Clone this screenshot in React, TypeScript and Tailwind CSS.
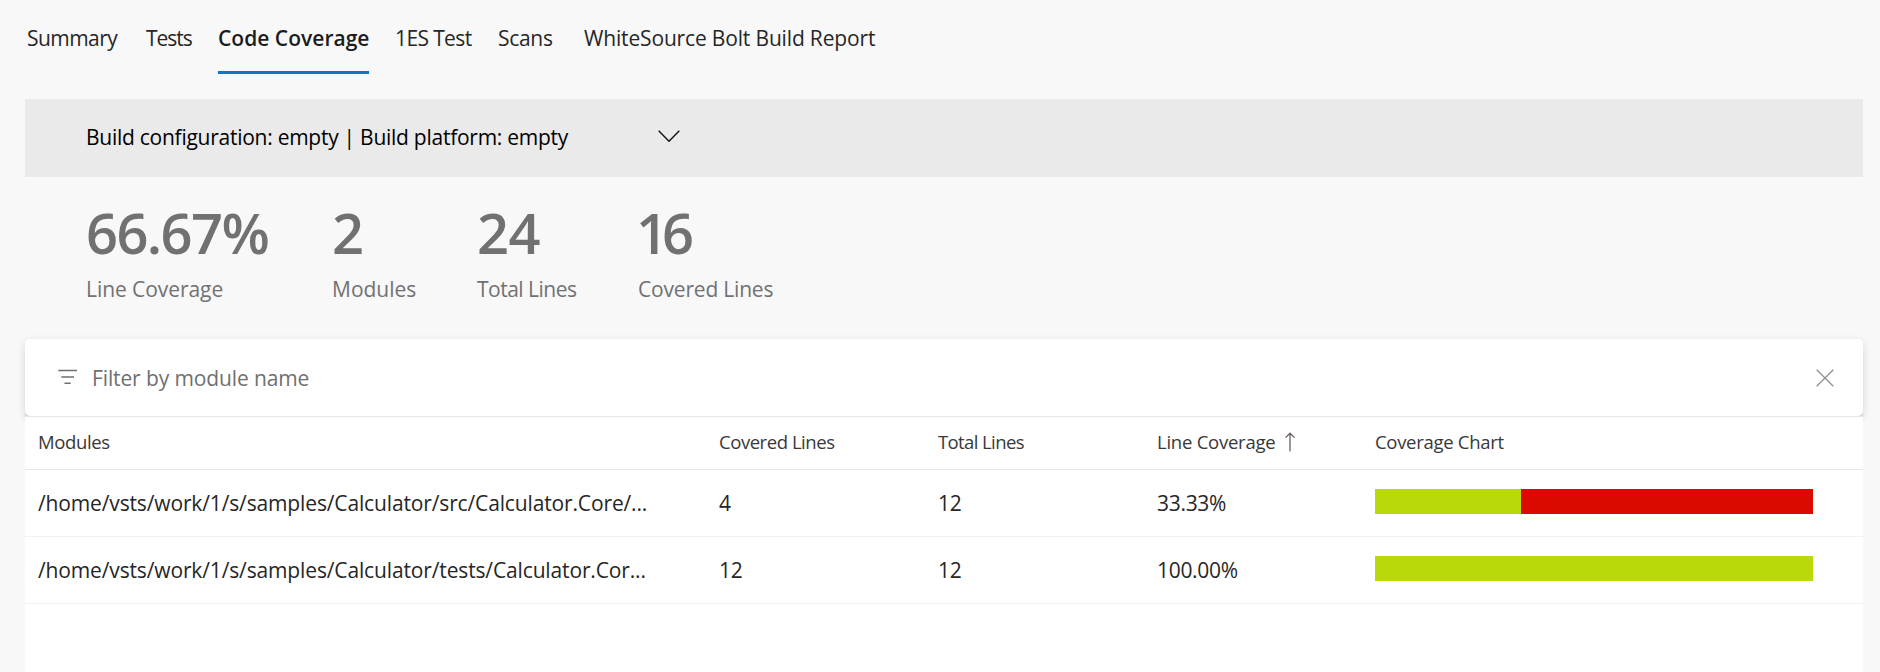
const tabs = [
  { label: 'Summary', cls: 'ml-[27px] w-[118px] tracking-[-0.55px]' },
  { label: 'Tests', cls: 'ml-[1px] w-[72px] tracking-[-1.05px]' },
  { label: 'Code Coverage', cls: 'w-[151px] font-semibold tracking-[0.02px]', active: true },
  { label: '1ES Test', cls: 'ml-[26px] w-[103px] tracking-[-0.62px]' },
  { label: 'Scans', cls: 'w-[86px] tracking-[-0.3px]' },
  { label: 'WhiteSource Bolt Build Report', cls: 'tracking-[-0.16px]' },
];

const stats = [
  { value: '66.67%', label: 'Line Coverage', col: 'w-[246px]', num: 'tracking-[-1.6px]', text: 'tracking-[-0.06px]' },
  { value: '2', label: 'Modules', col: 'w-[145px]', num: '', text: '' },
  { value: '24', label: 'Total Lines', col: 'w-[161px]', num: 'tracking-[-0.5px]', text: 'tracking-[-0.5px]' },
  { value: '16', label: 'Covered Lines', col: 'w-[180px]', num: '-ml-[2px] tracking-[-6px]', text: 'tracking-[-0.19px]' },
];

const rows = [
  {
    name: '/home/vsts/work/1/s/samples/Calculator/src/Calculator.Core/...',
    covered: 4,
    total: 12,
    percent: '33.33%',
  },
  {
    name: '/home/vsts/work/1/s/samples/Calculator/tests/Calculator.Cor...',
    covered: 12,
    total: 12,
    percent: '100.00%',
  },
];

const columns = 'grid grid-cols-[694px_219px_219px_218px_438px] items-center';

function ChevronDown() {
  return (
    <svg width="22" height="13" viewBox="0 0 22 13" fill="none" stroke="#111" strokeWidth="1.4" className="ml-[88px] -mt-[4px]">
      <path d="M0.7 0.8 11 11.2 21.3 0.8" />
    </svg>
  );
}

function FilterIcon() {
  return (
    <svg width="20" height="16" viewBox="0 0 20 16" fill="none" stroke="#707070" strokeWidth="1.4" className="-mt-[2px]">
      <path d="M0.3 1.5H19M3.3 8H16M6.5 14.3H12.7" />
    </svg>
  );
}

function CloseIcon() {
  return (
    <svg width="18" height="18" viewBox="0 0 18 18" fill="none" stroke="#8f8f8f" strokeWidth="1.3">
      <path d="M0.7 0.7 17.3 17.3M17.3 0.7 0.7 17.3" />
    </svg>
  );
}

function SortArrow() {
  return (
    <svg width="10" height="20" viewBox="0 0 10 20" fill="none" stroke="#6a6262" strokeWidth="1.3" className="ml-[10px]">
      <path d="M5 19.5V1M0.6 5.6 5 1.2 9.4 5.6" />
    </svg>
  );
}

export default function App() {
  return (
    <div className="flex h-[672px] w-[1880px] flex-col overflow-hidden bg-[#f8f8f8] font-['Open_Sans','Noto_Sans',sans-serif] text-[21px] leading-7 text-[#262626]">
      <nav className="flex h-[74px] shrink-0 whitespace-nowrap pt-6">
        {tabs.map((t) => (
          <div key={t.label} className={`${t.cls} ${t.active ? 'border-b-3 border-[#0f76c4] text-[#1c1c1c]' : ''}`}>
            {t.label}
          </div>
        ))}
      </nav>

      <main className="mr-[17px] ml-[25px] mt-[25px] flex grow flex-col">
        <div className="flex h-[78px] shrink-0 items-center bg-[#eaeaea] pl-[61px] text-black">
          <span className="-mt-[2px] w-[484px] whitespace-nowrap tracking-[-0.26px]">
            Build configuration: empty | Build platform: empty
          </span>
          <ChevronDown />
        </div>

        <div className="flex h-[162px] shrink-0 pl-[61px] pt-[27px] text-[#717171]">
          {stats.map((s) => (
            <div key={s.label} className={s.col}>
              <div className={`text-[56px] font-semibold leading-[56px] ${s.num}`}>{s.value}</div>
              <div className={`mt-[15px] ${s.text}`}>{s.label}</div>
            </div>
          ))}
        </div>

        <div className="h-[77px] shrink-0 bg-[linear-gradient(#f8f8f8_50%,#e4e4e4_50%)]">
          <div className="flex h-[77px] items-center rounded-[5px] bg-white pl-[33px] pr-[29px] shadow-[0_3px_9px_rgba(0,0,0,0.14)]">
            <FilterIcon />
            <span className="ml-[14px] mt-px grow tracking-[-0.12px] text-[#707070]">Filter by module name</span>
            <CloseIcon />
          </div>
        </div>

        <section className="relative grow border-t border-[#e6e6e6] bg-white">
          <div className={`${columns} h-[53px] border-b border-[#e8e8e8] pb-[2px] text-[18.5px] text-[#383838]`}>
            <span className="pl-[13px] tracking-[-0.38px]">Modules</span>
            <span className="tracking-[-0.45px]">Covered Lines</span>
            <span className="tracking-[-0.6px]">Total Lines</span>
            <span className="flex items-center tracking-[-0.24px]">
              Line Coverage
              <SortArrow />
            </span>
            <span className="tracking-[-0.3px]">Coverage Chart</span>
          </div>
          {rows.map((r) => (
            <div key={r.name} className={`${columns} h-[67px] border-b border-[#f2f2f2] tracking-[-0.3px]`}>
              <span className="whitespace-nowrap pl-[13px] tracking-[-0.14px]">{r.name}</span>
              <span>{r.covered}</span>
              <span>{r.total}</span>
              <span>{r.percent}</span>
              <div className="-mt-[3px] flex h-[25px] bg-[#da0a00]">
                <div className="bg-[#bad80a]" style={{ width: `${(r.covered / r.total) * 100}%` }} />
              </div>
            </div>
          ))}
        </section>
      </main>
    </div>
  );
}
